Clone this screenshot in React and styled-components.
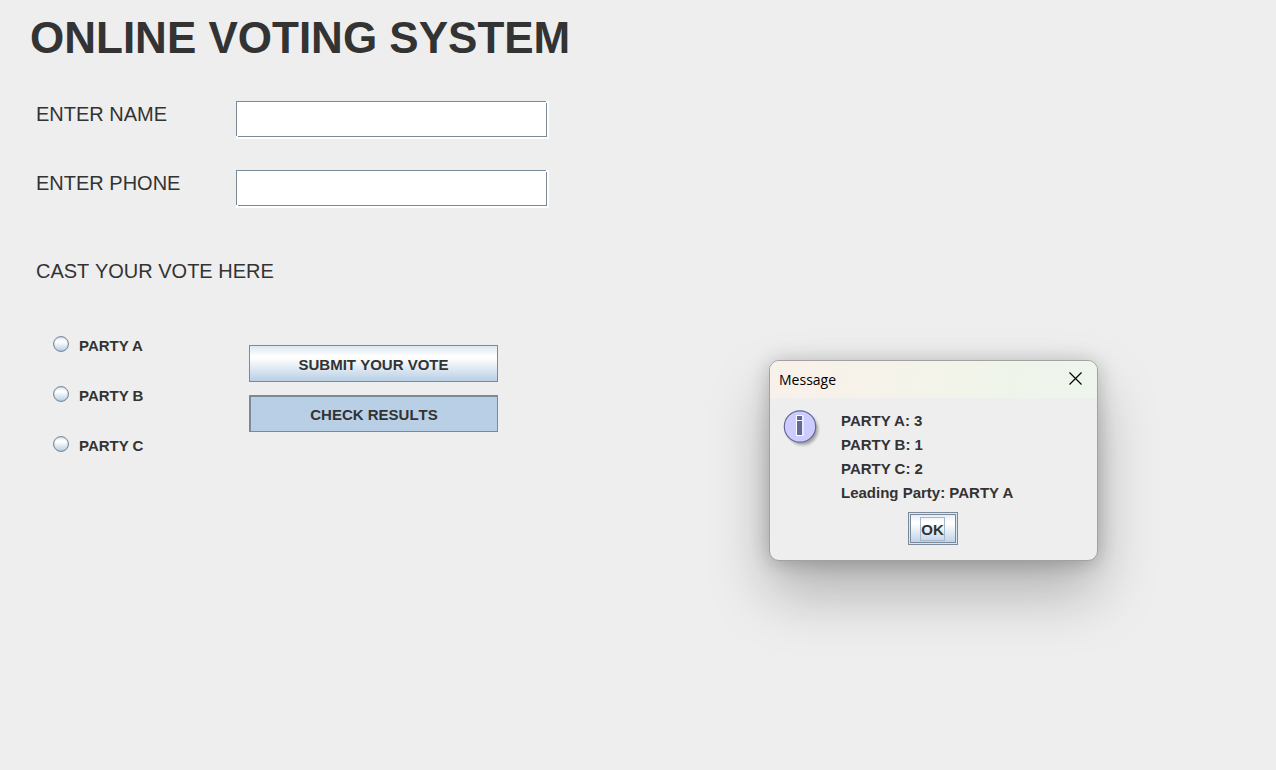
import React, { useState } from "react";
import styled, { createGlobalStyle, css } from "styled-components";

const ink = "#333333";
const steel = "#7a8a99";
const metal = "linear-gradient(#dde8f3 0%, #ffffff 30%, #ffffff 34%, #b8cfe5 100%)";

const GlobalStyle = createGlobalStyle`
  * { box-sizing: border-box; }
  body {
    margin: 0;
    background: #eeeeee;
    color: ${ink};
    font-family: "Liberation Sans", Arial, sans-serif;
  }
`;

const Page = styled.main`
  min-height: 100vh;
  padding: 12px 30px;
`;

const Title = styled.h1`
  margin: 0;
  font-size: 44px;
  line-height: 52px;
  font-weight: 700;
`;

const Form = styled.form`
  padding: 37px 0 0 6px;
`;

const Fields = styled.div`
  display: grid;
  grid-template-columns: 200px minmax(0, 313px);
  row-gap: 31px;
`;

const Label = styled.label`
  font-size: 20px;
  line-height: 26px;
  font-kerning: none;
`;

const TextField = styled.input`
  width: 100%;
  height: 38px;
  padding: 0 8px;
  border: 0;
  outline: 0;
  font: inherit;
  font-size: 20px;
  color: ${ink};
  background:
    linear-gradient(${steel}, ${steel}) 0 0 / calc(100% - 3px) 1px no-repeat,
    linear-gradient(${steel}, ${steel}) 0 0 / 1px calc(100% - 3px) no-repeat,
    linear-gradient(${steel}, ${steel}) calc(100% - 2px) 2px / 1px calc(100% - 4px) no-repeat,
    linear-gradient(${steel}, ${steel}) 2px calc(100% - 2px) / calc(100% - 4px) 1px no-repeat,
    #ffffff;
`;

const Heading = styled.h2`
  margin: 50px 0 0;
  font-size: 20px;
  line-height: 26px;
  font-weight: 400;
  font-kerning: none;
`;

const VoteArea = styled.div`
  display: grid;
  grid-template-columns: 196px minmax(0, 249px);
  align-items: start;
  padding: 50px 0 0 17px;
`;

const Choices = styled.div`
  display: grid;
  gap: 28px;
`;

const Choice = styled.label`
  display: flex;
  align-items: flex-start;
  gap: 10px;
  padding-top: 2px;
  font-size: 15px;
  line-height: 20px;
  font-weight: 700;
`;

const Radio = styled.input`
  appearance: none;
  width: 16px;
  height: 16px;
  margin: 0;
  border: 1px solid ${steel};
  border-radius: 50%;
  background: ${metal};
  box-shadow: inset 0 0 1px ${steel};

  &:checked {
    background: radial-gradient(${ink} 0 4px, transparent 5px), ${metal};
  }
`;

const Actions = styled.div`
  display: grid;
  gap: 13px;
  padding-top: 11px;
`;

const Button = styled.button`
  height: 37px;
  padding: 2px 0 0;
  border: 1px solid ${steel};
  border-radius: 0;
  font: inherit;
  font-size: 15px;
  line-height: 20px;
  font-weight: 700;
  font-kerning: none;
  color: ${ink};
  background: ${metal};

  ${({ $pressed }) =>
    $pressed &&
    css`
      border-width: 2px 1px 1px 2px;
      background: #b8cfe5;
    `}
`;

const Dialog = styled.section`
  position: absolute;
  top: 360px;
  left: 769px;
  width: 329px;
  overflow: hidden;
  border: 1px solid #a2a2a2;
  border-radius: 10px;
  background: #eeeeee;
  box-shadow: 0 32px 60px rgba(0, 0, 0, 0.26), 0 2px 20px rgba(0, 0, 0, 0.22);
`;

const DialogBar = styled.header`
  display: flex;
  align-items: center;
  justify-content: space-between;
  height: 37px;
  padding: 0 15px 0 9px;
  background: linear-gradient(100deg, #f9f1e9 0%, #f5f3e9 40%, #f0f4ea 65%, #edf5ec 100%);
`;

const DialogTitle = styled.h2`
  margin: 0;
  font-family: "Open Sans", "Noto Sans", sans-serif;
  font-size: 14px;
  line-height: 20px;
  font-weight: 400;
  color: #000000;
`;

const CloseButton = styled.button`
  display: flex;
  padding: 0 0 2px;
  border: 0;
  background: transparent;
  color: #000000;
`;

const DialogBody = styled.div`
  display: flex;
  gap: 19px;
  padding: 10px 12px 0;
`;

const Lines = styled.div`
  padding-top: 1px;
  font-size: 15px;
  line-height: 24px;
  font-weight: 700;
`;

const Line = styled.p`
  margin: 0;
`;

const DialogFooter = styled.footer`
  display: flex;
  justify-content: center;
  padding: 7px 2px 15px 0;
`;

const OkButton = styled.button`
  display: grid;
  place-items: center;
  width: 50px;
  height: 33px;
  padding: 0;
  border: 1px solid ${steel};
  outline: 0;
  font: inherit;
  font-size: 15px;
  line-height: 20px;
  font-weight: 700;
  color: ${ink};
  background: ${metal};
  box-shadow: inset 0 0 0 1px #dbe6f1, inset 0 0 0 2px ${steel}, inset -1px 0 0 1px ${steel};
`;

const FocusRing = styled.span`
  padding-top: 2px;
  border: 1px solid #a3b8cc;
`;

const CloseIcon = () => (
  <svg width="13" height="13" viewBox="0 0 13 13" fill="none" stroke="currentColor" strokeWidth="1.2" aria-hidden="true">
    <path d="M0.5 0.5L12.5 12.5M12.5 0.5L0.5 12.5" />
  </svg>
);

const InfoIcon = () => (
  <svg width="40" height="42" viewBox="0 0 40 42" aria-hidden="true">
    <defs>
      <filter id="drop" x="-20%" y="-20%" width="150%" height="150%">
        <feGaussianBlur stdDeviation="1.5" />
      </filter>
    </defs>
    <circle cx="20.5" cy="21.5" r="15.5" fill="#000000" opacity="0.32" filter="url(#drop)" />
    <circle cx="18" cy="18.5" r="15.7" fill="#ccccff" stroke="#666699" strokeWidth="1.2" />
    <path d="M14 7h6v21h-6z" fill="#ffffff" />
    <path d="M20 7h2v21h-2z" fill="#e8e8ff" />
    <path d="M15 8h5v4h-5zM15 13h5v14h-5z" fill="#666699" />
  </svg>
);

const parties = ["PARTY A", "PARTY B", "PARTY C"];
const results = ["PARTY A: 3", "PARTY B: 1", "PARTY C: 2", "Leading Party: PARTY A"];

export default function App() {
  const [open, setOpen] = useState(true);

  return (
    <>
      <GlobalStyle />
      <Page>
        <Title>ONLINE VOTING SYSTEM</Title>
        <Form onSubmit={(event) => event.preventDefault()}>
          <Fields>
            <Label htmlFor="name">ENTER NAME</Label>
            <TextField id="name" type="text" />
            <Label htmlFor="phone">ENTER PHONE</Label>
            <TextField id="phone" type="tel" />
          </Fields>
          <Heading id="vote-heading">CAST YOUR VOTE HERE</Heading>
          <VoteArea>
            <Choices role="radiogroup" aria-labelledby="vote-heading">
              {parties.map((party) => (
                <Choice key={party}>
                  <Radio type="radio" name="party" value={party} />
                  {party}
                </Choice>
              ))}
            </Choices>
            <Actions>
              <Button type="submit">SUBMIT YOUR VOTE</Button>
              <Button type="button" $pressed={open} onClick={() => setOpen(true)}>
                CHECK RESULTS
              </Button>
            </Actions>
          </VoteArea>
        </Form>
      </Page>
      {open && (
        <Dialog role="dialog" aria-labelledby="dialog-title">
          <DialogBar>
            <DialogTitle id="dialog-title">Message</DialogTitle>
            <CloseButton type="button" aria-label="Close" onClick={() => setOpen(false)}>
              <CloseIcon />
            </CloseButton>
          </DialogBar>
          <DialogBody>
            <InfoIcon />
            <Lines>
              {results.map((line) => (
                <Line key={line}>{line}</Line>
              ))}
            </Lines>
          </DialogBody>
          <DialogFooter>
            <OkButton type="button" onClick={() => setOpen(false)}>
              <FocusRing>OK</FocusRing>
            </OkButton>
          </DialogFooter>
        </Dialog>
      )}
    </>
  );
}
